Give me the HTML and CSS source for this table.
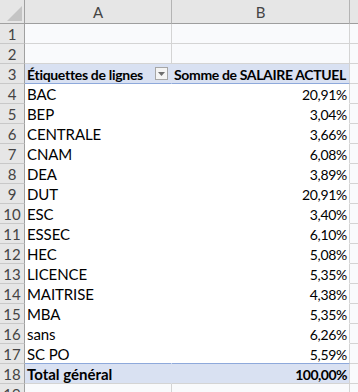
FILE: index.html
```html
<!DOCTYPE html>
<html lang="fr">
<head>
<meta charset="utf-8">
<title>Tableau croisé</title>
<link rel="stylesheet" href="styles.css">
</head>
<body>
<div class="sheet">
  <div class="corner"><svg width="15" height="15" viewBox="0 0 15 15"><polygon points="15,0 15,15 0,15" fill="#c4c4c4"/></svg></div>
  <div class="colh">A</div>
  <div class="colh">B</div>
  <div class="colh colh-last"></div>

  <div class="rowh">1</div><div class="cell"></div><div class="cell"></div><div class="cell cell-last"></div>
  <div class="rowh">2</div><div class="cell"></div><div class="cell"></div><div class="cell cell-last"></div>

  <div class="rowh">3</div>
  <div class="cell pv-head pv-a"><span>Étiquettes de lignes</span><span class="dd"><svg width="7" height="4" viewBox="0 0 7 4"><polygon points="0,0 7,0 3.5,4" fill="#6e6e6e"/></svg></span></div>
  <div class="cell pv-head pv-b-head">Somme de SALAIRE ACTUEL</div>
  <div class="cell cell-last"></div>

  <div class="rowh">4</div><div class="cell pv pv-a">BAC</div><div class="cell pv pv-b">20,91%</div><div class="cell cell-last"></div>
  <div class="rowh">5</div><div class="cell pv pv-a">BEP</div><div class="cell pv pv-b">3,04%</div><div class="cell cell-last"></div>
  <div class="rowh">6</div><div class="cell pv pv-a">CENTRALE</div><div class="cell pv pv-b">3,66%</div><div class="cell cell-last"></div>
  <div class="rowh">7</div><div class="cell pv pv-a">CNAM</div><div class="cell pv pv-b">6,08%</div><div class="cell cell-last"></div>
  <div class="rowh">8</div><div class="cell pv pv-a">DEA</div><div class="cell pv pv-b">3,89%</div><div class="cell cell-last"></div>
  <div class="rowh">9</div><div class="cell pv pv-a">DUT</div><div class="cell pv pv-b">20,91%</div><div class="cell cell-last"></div>
  <div class="rowh">10</div><div class="cell pv pv-a">ESC</div><div class="cell pv pv-b">3,40%</div><div class="cell cell-last"></div>
  <div class="rowh">11</div><div class="cell pv pv-a">ESSEC</div><div class="cell pv pv-b">6,10%</div><div class="cell cell-last"></div>
  <div class="rowh">12</div><div class="cell pv pv-a">HEC</div><div class="cell pv pv-b">5,08%</div><div class="cell cell-last"></div>
  <div class="rowh">13</div><div class="cell pv pv-a">LICENCE</div><div class="cell pv pv-b">5,35%</div><div class="cell cell-last"></div>
  <div class="rowh">14</div><div class="cell pv pv-a">MAITRISE</div><div class="cell pv pv-b">4,38%</div><div class="cell cell-last"></div>
  <div class="rowh">15</div><div class="cell pv pv-a">MBA</div><div class="cell pv pv-b">5,35%</div><div class="cell cell-last"></div>
  <div class="rowh">16</div><div class="cell pv pv-a">sans</div><div class="cell pv pv-b">6,26%</div><div class="cell cell-last"></div>
  <div class="rowh">17</div><div class="cell pv pv-a pv-last">SC PO</div><div class="cell pv pv-b pv-last">5,59%</div><div class="cell cell-last"></div>

  <div class="rowh">18</div>
  <div class="cell pv-total pv-a">Total général</div>
  <div class="cell pv-total pv-b">100,00%</div>
  <div class="cell cell-last"></div>

  <div class="rowh">19</div><div class="cell"></div><div class="cell"></div><div class="cell cell-last"></div>
</div>
</body>
</html>
```

FILE: styles.css
```css
html, body {
  margin: 0;
  padding: 0;
  background: #ffffff;
  overflow: hidden;
}

.sheet {
  display: grid;
  grid-template-columns: 25px 147px 178px 20px;
  grid-template-rows: 24px;
  grid-auto-rows: 20px;
  font-family: Lato, "Open Sans", sans-serif;
  font-size: 14px;
  letter-spacing: -0.3px;
  color: #000;
  width: 370px;
}

.sheet > div {
  box-sizing: border-box;
  overflow: hidden;
  white-space: nowrap;
}

.corner {
  background: #e6e6e6;
  border-right: 1px solid #a0a0a0;
  border-bottom: 1px solid #a0a0a0;
  display: flex;
  align-items: flex-end;
  justify-content: flex-end;
  padding: 0 2px 2px 0;
}

.colh {
  background: #e6e6e6;
  border-right: 1px solid #b4b4b4;
  border-bottom: 1px solid #9e9e9e;
  text-align: center;
  color: #444;
  font-size: 15px;
  line-height: 22px;
  padding-top: 1px;
  letter-spacing: 0;
}

.colh-last {
  border-right: none;
}

.rowh {
  background: #e6e6e6;
  border-right: 1px solid #a0a0a0;
  border-bottom: 1px solid #c8c8c8;
  color: #444;
  text-align: center;
  font-size: 15px;
  line-height: 19px;
  padding-top: 1px;
  letter-spacing: 0;
}

.cell {
  background: #f9fafc;
  border-right: 1px solid #d4d4d4;
  border-bottom: 1px solid #d4d4d4;
  line-height: 19px;
  padding-top: 1px;
}

.cell-last {
  border-right: none;
}

.pv {
  background: #ffffff;
  border-bottom-color: #ffffff;
}

.pv.pv-a {
  border-right-color: #ffffff;
  font-size: 15px;
  letter-spacing: -0.1px;
}

.pv-a {
  padding-left: 2px;
}

.pv-b {
  text-align: right;
  padding-right: 2px;
}

.pv-last {
  border-bottom-color: #8ea9db;
}

.pv-head {
  background: #d9e1f2;
  border-bottom: 1px solid #8ea9db;
  font-weight: 700;
}

.pv-head.pv-a {
  border-right-color: #d9e1f2;
  display: flex;
  align-items: center;
  justify-content: space-between;
  padding-right: 3px;
}

.pv-b-head {
  padding-left: 2px;
  font-size: 14px;
  letter-spacing: -0.35px;
}

.dd {
  box-sizing: border-box;
  width: 13px;
  height: 13px;
  border: 1px solid #a6a6a6;
  background: #f4f4f4;
  display: flex;
  align-items: center;
  justify-content: center;
  margin-top: -1px;
}

.dd svg {
  display: block;
}

.pv-total {
  background: #d9e1f2;
  font-weight: 700;
}

.pv-total.pv-a {
  border-right-color: #d9e1f2;
  font-size: 15px;
  letter-spacing: 0;
}

.pv-total.pv-b {
  letter-spacing: -0.5px;
}
```
